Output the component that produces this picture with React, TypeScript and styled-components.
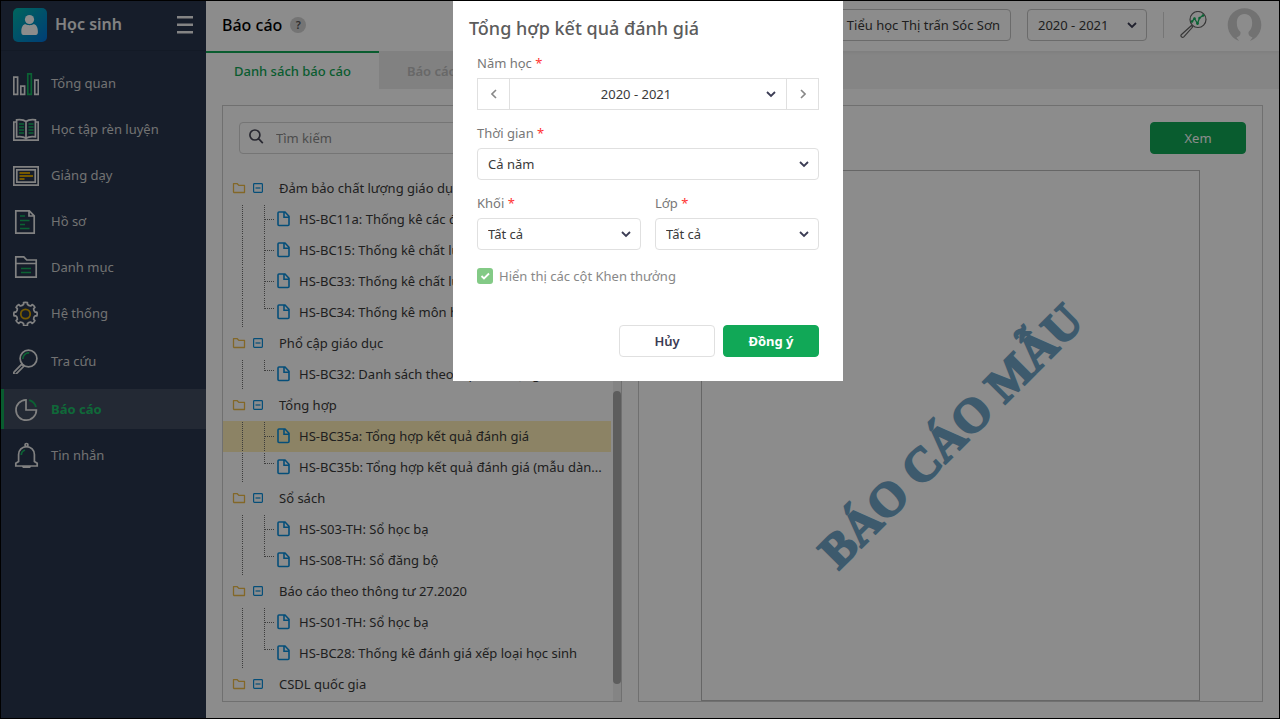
import React from "react";
import styled, { createGlobalStyle, css } from "styled-components";

const GREEN = "#11a857";

const GlobalStyle = createGlobalStyle`
  *, *::before, *::after { box-sizing: border-box; }
  body { margin: 0; background: #fff; }
  body, button, input, select {
    font-family: "Noto Sans", "Open Sans", sans-serif;
    font-size: 13px;
    line-height: 18px;
  }
  button, select { cursor: pointer; }
`;

/* ---------- page shell ---------- */

const Shell = styled.div`
  display: flex;
  height: 100vh;
  min-height: 560px;
  border: 1px solid #000;
  color: #3a3a3a;
`;

const Sidebar = styled.aside`
  flex: none;
  width: 205px;
  background: #28364e;
  color: #d8d8d8;
`;

const Brand = styled.div`
  display: flex;
  align-items: center;
  height: 50px;
  padding: 0 13px 2px 12px;
  gap: 8px;
  border-bottom: 1px solid #243046;
  color: #ededed;
`;

const BrandName = styled.span`
  flex: 1;
  margin-top: -2px;
  font-size: 16px;
  line-height: 24px;
  font-weight: 600;
`;

const PlainButton = styled.button`
  display: flex;
  align-items: center;
  justify-content: center;
  padding: 0;
  border: 0;
  background: none;
  color: inherit;
`;

const Menu = styled.nav`
  display: flex;
  flex-direction: column;
  gap: 6px;
  padding-top: 12px;
`;

const MenuItem = styled.a<{ $active?: boolean; $spaced?: boolean }>`
  display: flex;
  align-items: center;
  gap: 12px;
  height: 40px;
  padding: 0 12px;
  margin: ${(p) => (p.$spaced ? "2px 0" : "0")};
  color: #d0d0d0;
  text-decoration: none;
  ${(p) =>
    p.$active &&
    css`
      background: #414b5f;
      box-shadow: inset 3px 0 0 ${GREEN};
      color: #1dbf68;
      font-weight: 700;
    `}
`;

const Main = styled.main`
  flex: 1;
  min-width: 0;
  display: flex;
  flex-direction: column;
  background: #fff;
`;

const TopBar = styled.header`
  position: relative;
  display: flex;
  align-items: center;
  height: 50px;
  padding: 0 16px 2px;
  gap: 16px;
`;

const PageTitle = styled.h1`
  margin: 0;
  font-size: 16px;
  line-height: 24px;
  font-weight: 500;
  color: #000;
`;

const Help = styled.button`
  width: 16px;
  height: 16px;
  margin: 0 auto 0 -8px;
  padding: 0;
  border: 0;
  border-radius: 50%;
  background: #d3d3d3;
  color: #555;
  font-size: 11px;
  line-height: 16px;
  font-weight: 600;
`;

const School = styled.div`
  padding: 6px 10px;
  border: 1px solid #c3c3c3;
  border-radius: 4px;
  white-space: nowrap;
`;

const Divider = styled.span`
  width: 1px;
  height: 26px;
  background: #d8d8d8;
`;

const TabBar = styled.div`
  display: flex;
  height: 38px;
  background: #f2f2f2;
  box-shadow: inset 0 2px 2px #e9e9e9;
`;

const Tab = styled.button<{ $active?: boolean }>`
  padding: 0 28px;
  border: 0;
  border-top: 2px solid ${(p) => (p.$active ? GREEN : "transparent")};
  background: ${(p) => (p.$active ? "#fff" : "#ebebeb")};
  color: ${(p) => (p.$active ? GREEN : "#bdbdbd")};
  font-weight: ${(p) => (p.$active ? 500 : 600)};
`;

const Content = styled.div`
  flex: 1;
  min-height: 0;
  display: flex;
  gap: 16px;
  padding: 16px;
`;

const ListPanel = styled.section`
  flex: none;
  width: 400px;
  display: flex;
  flex-direction: column;
  border: 1px solid #cdcdcd;
`;

const SearchBox = styled.label`
  display: flex;
  align-items: center;
  gap: 12px;
  height: 32px;
  margin: 16px 16px 19px;
  padding: 0 9px;
  border: 1px solid #d5d5d5;
  border-radius: 4px;
  color: #555;
`;

const SearchInput = styled.input`
  flex: 1;
  min-width: 0;
  padding: 0;
  border: 0;
  outline: 0;
  background: none;
  &::placeholder { color: #8c8c8c; opacity: 1; }
`;

/* ---------- report tree ---------- */

const TreeArea = styled.div`
  flex: 1;
  min-height: 0;
  display: flex;
  gap: 2px;
`;

const Tree = styled.div`
  flex: 1;
  min-width: 0;
  overflow: hidden;
`;

const ParentRow = styled.div`
  display: flex;
  align-items: center;
  height: 31px;
  padding: 0 8px 2px 9px;
`;

const ParentLabel = styled.span`
  margin-left: 16px;
`;

const Toggle = styled(PlainButton)`
  margin-left: 7px;
`;

const ChildRow = styled.div<{ $selected?: boolean }>`
  display: flex;
  align-items: center;
  height: 31px;
  padding: 0 8px 2px 19px;
  background: ${(p) => (p.$selected ? "#ffefb8" : "transparent")};
`;

const OuterGuide = styled.span`
  flex: none;
  align-self: stretch;
  width: 22px;
  margin: 1px 0 -1px;
  border-left: 1px dotted #6e6e6e;
`;

const InnerGuide = styled.span<{ $last?: boolean }>`
  flex: none;
  align-self: stretch;
  width: 10px;
  margin: 1px 3px -1px 0;
  border-left: ${(p) => (p.$last ? "0" : "1px dotted #6e6e6e")};
  &::before {
    content: "";
    display: block;
    height: ${(p) => (p.$last ? "11px" : "15px")};
    border-bottom: 1px dotted #6e6e6e;
    border-left: ${(p) => (p.$last ? "1px dotted #6e6e6e" : "0")};
  }
`;

const ChildLabel = styled.span`
  margin-left: 9px;
  overflow: hidden;
  text-overflow: ellipsis;
  white-space: nowrap;
`;

const DocSvg = styled.svg`
  flex: none;
`;

const ScrollTrack = styled.div`
  flex: none;
  display: flex;
  flex-direction: column;
  width: 8px;
  background: #f0f0f0;
  &::before { content: ""; flex: 218; }
  &::after { content: ""; flex: 17; }
`;

const ScrollThumb = styled.div`
  flex: 293;
  border-radius: 4px;
  background: #aaa;
`;

/* ---------- preview ---------- */

const PreviewPanel = styled.section`
  flex: 1;
  min-width: 0;
  display: flex;
  flex-direction: column;
  border: 1px solid #cdcdcd;
`;

const PreviewTools = styled.div`
  display: flex;
  justify-content: flex-end;
  padding: 16px;
`;

const Button = styled.button<{ $primary?: boolean; $strong?: boolean }>`
  width: 96px;
  height: 32px;
  padding: 0;
  border: 1px solid ${(p) => (p.$primary ? GREEN : "#e0e0e0")};
  border-radius: 4px;
  background: ${(p) => (p.$primary ? GREEN : "#fff")};
  color: ${(p) => (p.$primary ? "#fff" : "#3b3c54")};
  font-weight: ${(p) => (p.$strong ? (p.$primary ? 700 : 600) : 400)};
`;

const Sheet = styled.div`
  flex: 1;
  width: 80%;
  margin: 0 auto;
  display: grid;
  place-items: center;
  border: 1px solid #bbb;
`;

const Watermark = styled.div`
  transform: rotate(-45deg);
  font-family: "Liberation Serif", serif;
  font-size: 48px;
  line-height: 48px;
  font-weight: 700;
  color: #6fa4c6;
  -webkit-text-stroke: 2px #6fa4c6;
  white-space: nowrap;
`;

/* ---------- form parts ---------- */

const SelectBox = styled.span<{ $width?: string }>`
  position: relative;
  display: block;
  flex: ${(p) => (p.$width ? "none" : "1")};
  width: ${(p) => p.$width ?? "auto"};
  min-width: 0;
`;

const Select = styled.select<{ $joined?: boolean; $muted?: boolean }>`
  appearance: none;
  display: block;
  width: 100%;
  height: 32px;
  padding: 0 ${(p) => (p.$joined ? "24px 0 0" : "28px 0 10px")};
  border: 1px solid ${(p) => (p.$muted ? "#c3c3c3" : "#e0e0e0")};
  border-width: ${(p) => (p.$joined ? "1px 0" : "1px")};
  border-radius: ${(p) => (p.$joined ? "0" : "4px")};
  background: #fff;
  color: #3a3a3a;
  text-align-last: ${(p) => (p.$joined ? "center" : "left")};
`;

const SelectArrow = styled.svg`
  position: absolute;
  right: 10px;
  top: 13px;
  pointer-events: none;
`;

const Backdrop = styled.div`
  position: fixed;
  inset: 1px;
  display: flex;
  justify-content: center;
  align-items: flex-start;
  padding-left: 16px;
  background: rgba(0, 0, 0, 0.45);
`;

const Dialog = styled.form`
  width: 390px;
  padding: 14px 24px 24px;
  background: #fff;
`;

const DialogTitle = styled.h2`
  margin: 0 0 13px -8px;
  font-size: 18px;
  line-height: 26px;
  font-weight: 500;
  color: #5c5c5c;
`;

const Fields = styled.div`
  display: grid;
  grid-template-columns: 1fr 1fr;
  gap: 14px;
`;

const Field = styled.div<{ $wide?: boolean }>`
  display: flex;
  flex-direction: column;
  gap: 6px;
  grid-column: ${(p) => (p.$wide ? "1 / -1" : "auto")};
`;

const Label = styled.label`
  color: #777;
`;

const Required = styled.span`
  color: #f33;
`;

const Stepper = styled.div`
  display: flex;
`;

const StepButton = styled(PlainButton)`
  width: 33px;
  height: 32px;
  border: 1px solid #e0e0e0;
  color: #888;
`;

const CheckRow = styled.label`
  display: flex;
  align-items: center;
  gap: 6px;
  margin-top: 17px;
  color: #888;
`;

const CheckBox = styled.span`
  position: relative;
  display: flex;
  width: 16px;
  height: 16px;
`;

const CheckInput = styled.input`
  appearance: none;
  width: 16px;
  height: 16px;
  margin: 0;
  border-radius: 3px;
  background: #83ca86;
`;

const CheckMark = styled.svg`
  position: absolute;
  inset: 0;
  pointer-events: none;
`;

const Actions = styled.div`
  display: flex;
  justify-content: flex-end;
  gap: 8px;
  margin-top: 40px;
`;

/* ---------- icons ---------- */

const line = { fill: "none", stroke: "#ececec", strokeWidth: 1.7 } as const;
const ok = "#14b35e";
const gold = "#d9a400";

const MenuSvg = ({ children }: { children: React.ReactNode }) => (
  <svg width="26" height="26" viewBox="0 0 26 26" aria-hidden="true" {...line}>
    {children}
  </svg>
);

/* Outline of a cog with eight rounded teeth round the centre (12.5, 14). */
const GEAR = (() => {
  let d = "";
  const at = (r: number, a: number) =>
    `${(12.5 + r * Math.sin(a)).toFixed(2)} ${(14 - r * Math.cos(a)).toFixed(2)}`;
  for (let i = 0; i < 8; i++) {
    const c = (i * Math.PI) / 4;
    d += `${i ? "L" : "M"}${at(9.8, c - 0.2)}L${at(11.5, c - 0.17)}Q${at(12, c)} ${at(11.5, c + 0.17)}L${at(9.8, c + 0.2)}`;
    d += `Q${at(8.6, c + Math.PI / 8)} ${at(9.8, c + Math.PI / 4 - 0.2)}`;
  }
  return d + "Z";
})();

const icons: Record<string, React.ReactNode> = {
  chart: (
    <MenuSvg>
      <path d="M.8 7.2h3.8v17.1H.8zM7.8 16.2h3.8v8.1H7.8zM21.8 10.2h3.5v14.1h-3.5z" />
      <path stroke={ok} d="M14.8 3.8h3.5v20.5h-3.5z" />
    </MenuSvg>
  ),
  book: (
    <MenuSvg>
      <path d="M13 5.5C11 3.8 7 3.4 3.6 3.8v17c3.5-.5 7.4 0 9.4 1.5 2-1.5 5.900-2 9.400-1.500v-17C19 3.400 15 3.800 13 5.500zM13 5.500v18" />
      <path d="M3.600 6H.8v18.200h24.400V6h-2.800" />
      <path stroke={ok} d="M6 8h5M6 11h5M6 14h5M6 17h5M15.500 8h5M15.500 11h5M15.500 14h5M15.500 17h5" />
    </MenuSvg>
  ),
  board: (
    <MenuSvg>
      <path d="M.8 4.800h24.400v18.400H.8zM3.800 7.800h18.400v12.400H3.800z" />
      <path stroke={gold} d="M6.500 11h10.500M6.500 14h13.500M6.500 17h5" strokeWidth="1.800" />
    </MenuSvg>
  ),
  file: (
    <MenuSvg>
      <path d="M2.800 2.800h13.500l4.900 5v17.400H2.800zM16 3v5h5" />
      <path stroke={ok} d="M7 8h5M7 12.500h9.500M7 16.500h5M7 20.500h9.500" />
    </MenuSvg>
  ),
  folder: (
    <MenuSvg>
      <path d="M2.800 23.200V2.800h8l3 3.200h9.400v17.200zM3 9.500h20" />
      <path stroke={ok} d="M8 14.500h10M8 18.500h10" />
    </MenuSvg>
  ),
  gear: (
    <MenuSvg>
      <path d={GEAR} strokeLinejoin="round" />
      <circle cx="12.500" cy="14" r="4.700" stroke={gold} strokeWidth="1.800" />
    </MenuSvg>
  ),
  search: (
    <MenuSvg>
      <circle cx="15.500" cy="10.500" r="8.400" />
      <path d="M8.800 16.200L1.200 23.800a1.400 1.400 0 0 0 2 2.100l7.600-7.600z" />
      <path stroke={ok} d="M9.800 11a5.800 5.800 0 0 1 6.400-6" />
    </MenuSvg>
  ),
  pie: (
    <MenuSvg>
      <path d="M13 3.800A10.200 10.200 0 1 0 23.400 14H13z" />
      <path stroke={ok} d="M16.200 4.200A10.200 10.200 0 0 1 23 11" strokeWidth="1.800" />
    </MenuSvg>
  ),
  bell: (
    <MenuSvg>
      <path d="M5.600 19.500V12.500a7.900 7.900 0 0 1 15.800 0V19.500l2.800 1.800v2.700H2.800v-2.700zM9.500 24l1 1.300h6l1-1.300" />
      <circle cx="13.500" cy="3" r="1.500" />
      <path stroke={ok} d="M8.300 13a5.500 5.500 0 0 1 3.700-5" />
    </MenuSvg>
  ),
};

const BrandLogo = () => (
  <svg width="34" height="34" viewBox="0 0 34 34" aria-hidden="true">
    <defs>
      <linearGradient id="brand" x1="0" y1="0" x2="1" y2="1">
        <stop offset="0" stopColor="#00b8a9" />
        <stop offset="1" stopColor="#0070d8" />
      </linearGradient>
    </defs>
    <rect width="34" height="34" rx="5" fill="url(#brand)" />
    <circle cx="16.500" cy="11.500" r="4.600" fill="#fff" />
    <path d="M8.300 24c0-5.600 2-8 4.600-7.700 1.600 1.200 5.600 1.200 7.200 0 2.600-.3 4.800 2.100 4.800 7.700 0 2-.8 3-2 3H10.300c-1.200 0-2-1-2-3z" fill="#fff" />
  </svg>
);

const Chevron = () => (
  <SelectArrow width="10" height="7" viewBox="0 0 10 7" aria-hidden="true">
    <path d="M1 1l4 4 4-4" fill="none" stroke="#3b3c54" strokeWidth="1.800" />
  </SelectArrow>
);

const FolderIcon = () => (
  <svg width="14" height="12" viewBox="0 0 14 12" aria-hidden="true">
    <path d="M1.500 10V1.700h3.800l1.500 1.700h5.700V10.500H1.800z" fill="none" stroke="#efbc48" strokeWidth="1.300" strokeLinejoin="round" />
  </svg>
);

const MinusBox = () => (
  <svg width="10" height="10" viewBox="0 0 10 10" aria-hidden="true">
    <rect x=".6" y=".6" width="8.800" height="8.800" rx=".8" fill="none" stroke="#0a8fdc" strokeWidth="1.200" />
    <path d="M2.500 5h5" stroke="#0a8fdc" strokeWidth="1.200" />
  </svg>
);

const DocIcon = () => (
  <DocSvg width="13" height="16" viewBox="0 0 13 16" aria-hidden="true">
    <path d="M2 1h6l4 4.200V13.500q0 1-1 1H2q-1 0-1-1V2q0-1 1-1zM7 1v5.200h5" fill="none" stroke="#0a8fdc" strokeWidth="1.600" />
  </DocSvg>
);

/* ---------- data ---------- */

const menu = [
  { icon: "chart", label: "Tổng quan" },
  { icon: "book", label: "Học tập rèn luyện" },
  { icon: "board", label: "Giảng dạy" },
  { icon: "file", label: "Hồ sơ" },
  { icon: "folder", label: "Danh mục" },
  { icon: "gear", label: "Hệ thống" },
  { icon: "search", label: "Tra cứu", spaced: true },
  { icon: "pie", label: "Báo cáo", active: true },
  { icon: "bell", label: "Tin nhắn" },
];

const SELECTED = "HS-BC35a: Tổng hợp kết quả đánh giá";

const tree = [
  {
    name: "Đảm bảo chất lượng giáo dục",
    reports: [
      "HS-BC11a: Thống kê các điểm",
      "HS-BC15: Thống kê chất lượng",
      "HS-BC33: Thống kê chất lượng",
      "HS-BC34: Thống kê môn học",
    ],
  },
  { name: "Phổ cập giáo dục", reports: ["HS-BC32: Danh sách theo lớp đối tượng"] },
  { name: "Tổng hợp", reports: [SELECTED, "HS-BC35b: Tổng hợp kết quả đánh giá (mẫu dàn..."] },
  { name: "Sổ sách", reports: ["HS-S03-TH: Sổ học bạ", "HS-S08-TH: Sổ đăng bộ"] },
  {
    name: "Báo cáo theo thông tư 27.2020",
    reports: ["HS-S01-TH: Sổ học bạ", "HS-BC28: Thống kê đánh giá xếp loại học sinh"],
  },
  { name: "CSDL quốc gia", reports: [] },
];

const SelectField = ({ id, label, value }: { id: string; label: string; value: string }) => (
  <>
    <Label htmlFor={id}>
      {label} <Required>*</Required>
    </Label>
    <SelectBox>
      <Select id={id}>
        <option>{value}</option>
      </Select>
      <Chevron />
    </SelectBox>
  </>
);

export default function App() {
  return (
    <>
      <GlobalStyle />
      <Shell>
        <Sidebar>
          <Brand>
            <BrandLogo />
            <BrandName>Học sinh</BrandName>
            <PlainButton aria-label="Menu">
              <svg width="16" height="18" viewBox="0 0 16 18" aria-hidden="true">
                <path d="M0 1.200h16M0 8.700h16M0 16.200h16" stroke="#f0f0f0" strokeWidth="2.400" />
              </svg>
            </PlainButton>
          </Brand>
          <Menu>
            {menu.map((m) => (
              <MenuItem key={m.label} href="#" $active={m.active} $spaced={m.spaced}>
                {icons[m.icon]}
                {m.label}
              </MenuItem>
            ))}
          </Menu>
        </Sidebar>

        <Main>
          <TopBar>
            <PageTitle>Báo cáo</PageTitle>
            <Help aria-label="Help">?</Help>
            <School>Trường Tiểu học Thị trấn Sóc Sơn</School>
            <SelectBox $width="120px">
              <Select $muted aria-label="Năm học">
                <option>2020 - 2021</option>
              </Select>
              <Chevron />
            </SelectBox>
            <Divider />
            <PlainButton aria-label="Tra cứu">
              <svg width="31" height="28" viewBox="0 0 31 28" aria-hidden="true" fill="none">
                <circle cx="18" cy="8.500" r="8" stroke="#666" strokeWidth="1.200" />
                <path d="M11.500 14.500L1.500 23.500a1.500 1.500 0 0 0 2.300 2.300l9-10z" stroke="#666" strokeWidth="1.200" />
                <path d="M12 10.500l2.500-3 3 5 2-5.500 3.500-2.500" stroke={ok} strokeWidth="1.300" />
                <g fill={ok}>
                  <circle cx="12" cy="10.500" r="1.300" />
                  <circle cx="14.500" cy="7.500" r="1.300" />
                  <circle cx="17.500" cy="12.500" r="1.400" />
                  <circle cx="19.500" cy="7" r="1.200" />
                  <circle cx="23" cy="4.500" r="1.300" />
                </g>
              </svg>
            </PlainButton>
            <PlainButton aria-label="Tài khoản">
              <svg width="36" height="36" viewBox="0 0 36 36" aria-hidden="true">
                <circle cx="17.500" cy="18" r="16.800" fill="#cfcfcf" />
                <path d="M17.500 7c5 0 7.700 3.700 7.700 9 0 3.800-1.300 7-3.700 9-.4 3 1 4.300 4 5.500L21.500 36h-8l-4-5.500c3-1.200 4.400-2.500 4-5.500-2.400-2-3.700-5.200-3.700-9 0-5.300 2.700-9 7.700-9z" fill="#fff" />
              </svg>
            </PlainButton>
          </TopBar>

          <TabBar>
            <Tab $active>Danh sách báo cáo</Tab>
            <Tab>Báo cáo</Tab>
          </TabBar>

          <Content>
            <ListPanel>
              <SearchBox>
                <svg width="15" height="18" viewBox="0 0 15 18" aria-hidden="true">
                  <path d="M5.900 1a5 5 0 1 0 0 10 5 5 0 0 0 0-10zM9.500 9.600l4.300 4.600" fill="none" stroke="#4a4a5a" strokeWidth="1.700" />
                </svg>
                <SearchInput placeholder="Tìm kiếm" aria-label="Tìm kiếm" />
              </SearchBox>
              <TreeArea>
                <Tree>
                  {tree.map((group) => (
                    <React.Fragment key={group.name}>
                      <ParentRow>
                        <FolderIcon />
                        <Toggle aria-label={group.name}>
                          <MinusBox />
                        </Toggle>
                        <ParentLabel>{group.name}</ParentLabel>
                      </ParentRow>
                      {group.reports.map((report, i) => (
                        <ChildRow key={report} $selected={report === SELECTED}>
                          <OuterGuide />
                          <InnerGuide $last={i === group.reports.length - 1} />
                          <DocIcon />
                          <ChildLabel>{report}</ChildLabel>
                        </ChildRow>
                      ))}
                    </React.Fragment>
                  ))}
                </Tree>
                <ScrollTrack>
                  <ScrollThumb />
                </ScrollTrack>
              </TreeArea>
            </ListPanel>

            <PreviewPanel>
              <PreviewTools>
                <Button $primary>Xem</Button>
              </PreviewTools>
              <Sheet>
                <Watermark>BÁO CÁO MẪU</Watermark>
              </Sheet>
            </PreviewPanel>
          </Content>
        </Main>
      </Shell>

      <Backdrop>
        <Dialog role="dialog" aria-labelledby="dialog-title">
          <DialogTitle id="dialog-title">Tổng hợp kết quả đánh giá</DialogTitle>
          <Fields>
            <Field $wide>
              <Label htmlFor="year">
                Năm học <Required>*</Required>
              </Label>
              <Stepper>
                <StepButton type="button" aria-label="Trước">
                  <svg width="6" height="10" viewBox="0 0 6 10" aria-hidden="true">
                    <path d="M5 1L1 5l4 4" fill="none" stroke="currentColor" strokeWidth="1.600" />
                  </svg>
                </StepButton>
                <SelectBox>
                  <Select id="year" $joined>
                    <option>2020 - 2021</option>
                  </Select>
                  <Chevron />
                </SelectBox>
                <StepButton type="button" aria-label="Sau">
                  <svg width="6" height="10" viewBox="0 0 6 10" aria-hidden="true">
                    <path d="M1 1l4 4-4 4" fill="none" stroke="currentColor" strokeWidth="1.600" />
                  </svg>
                </StepButton>
              </Stepper>
            </Field>
            <Field $wide>
              <SelectField id="period" label="Thời gian" value="Cả năm" />
            </Field>
            <Field>
              <SelectField id="grade" label="Khối" value="Tất cả" />
            </Field>
            <Field>
              <SelectField id="class" label="Lớp" value="Tất cả" />
            </Field>
          </Fields>
          <CheckRow>
            <CheckBox>
              <CheckInput type="checkbox" defaultChecked disabled />
              <CheckMark viewBox="0 0 16 16" aria-hidden="true">
                <path d="M4.500 8l2.500 2.500 5-5" fill="none" stroke="#fff" strokeWidth="1.800" />
              </CheckMark>
            </CheckBox>
            Hiển thị các cột Khen thưởng
          </CheckRow>
          <Actions>
            <Button type="button" $strong>Hủy</Button>
            <Button type="button" $primary $strong>Đồng ý</Button>
          </Actions>
        </Dialog>
      </Backdrop>
    </>
  );
}
